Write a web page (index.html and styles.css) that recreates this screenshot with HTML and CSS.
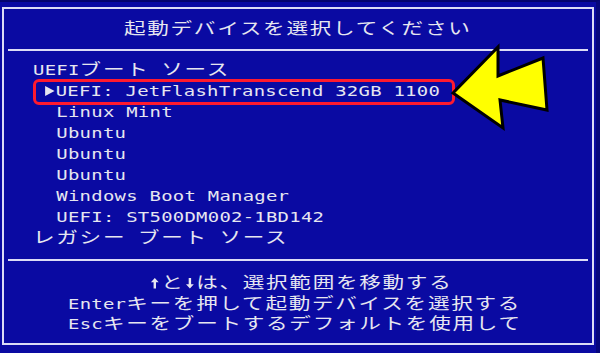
FILE: index.html
```html
<!DOCTYPE html>
<html lang="ja">
<head>
<meta charset="utf-8">
<title>起動デバイスを選択してください</title>
<link rel="stylesheet" href="styles.css">
</head>
<body>
<div class="screen">
  <div class="title">起動デバイスを選択してください</div>
  <div class="sep"></div>
  <div class="list">
    <div class="row">UEFI<span class="j">ブート</span> <span class="j">ソース</span></div>
    <div class="row"> <span class="tri"></span>UEFI: JetFlashTranscend 32GB 1100</div>
    <div class="row">  Linux Mint</div>
    <div class="row">  Ubuntu</div>
    <div class="row">  Ubuntu</div>
    <div class="row">  Ubuntu</div>
    <div class="row">  Windows Boot Manager</div>
    <div class="row">  UEFI: ST500DM002-1BD142</div>
    <div class="row"><span class="j">レガシー</span> <span class="j">ブート</span> <span class="j">ソース</span></div>
  </div>
  <div class="sep sep-bottom"></div>
  <div class="help">
    <div class="hrow">       <span class="ar" aria-label="↑"><svg viewBox="0 0 8.63 14" width="8.63" height="14"><path d="M4.3 2 L7.2 6.2 L5.2 6.2 L5.2 12.5 L3.4 12.5 L3.4 6.2 L1.4 6.2 Z" fill="#e6e6f0"/></svg></span><span class="j">と</span><span class="ar" aria-label="↓"><svg viewBox="0 0 8.63 14" width="8.63" height="14"><path d="M4.3 12.5 L7.2 8.3 L5.2 8.3 L5.2 2 L3.4 2 L3.4 8.3 L1.4 8.3 Z" fill="#e6e6f0"/></svg></span><span class="j">は、選択範囲を移動する</span></div>
    <div class="hrow">Enter<span class="j">キーを押して起動デバイスを選択する</span></div>
    <div class="hrow">Esc<span class="j">キーをブートするデフォルトを使用して</span></div>
  </div>
  <div class="highlight"></div>
  <svg class="arrow" viewBox="0 0 120 105" width="120" height="105">
    <polygon points="13,58 58,12 58,41 103,23 107,75 60,65 63,93" fill="#ffff00" stroke="#000000" stroke-width="3" stroke-linejoin="miter"/>
  </svg>
</div>
</body>
</html>
```
FILE: styles.css
```css
html, body {
  margin: 0;
  overflow: hidden;
}
html {
  background: #0a0aa0;
}
body {
  width: 600px;
  height: 353px;
  box-sizing: border-box;
  background: #0a0aa2;
  border-top: 2px solid #05056e;
  border-right: 4px solid #06067c;
  padding: 5px 0 0 2px;
}
.screen {
  position: relative;
  width: 592px;
  height: 338px;
  box-sizing: border-box;
  border: 2px solid #dcdcf6;
  color: #e6e6f0;
  font-family: "DejaVu Sans Mono", "Liberation Mono", monospace;
  font-size: 14px;
  letter-spacing: 0.2px;
}
.title {
  width: max-content;
  margin: 6px auto 0;
  height: 24px;
  line-height: 24px;
  font-family: "Noto Sans CJK JP", sans-serif;
  font-size: 16px;
  letter-spacing: 1.26px;
  transform: scaleX(1.35);
}
.sep {
  height: 2px;
  margin: 10px 4px 0;
  background: #dcdcf6;
}
.list {
  margin: 8.75px 0 0 29px;
  width: max-content;
  transform: scaleX(1.35);
  transform-origin: 0 0;
}
.row {
  height: 21px;
  line-height: 21px;
  white-space: pre;
}
.j {
  font-family: "Noto Sans CJK JP", sans-serif;
  font-size: 16px;
  line-height: 1;
  letter-spacing: 1.26px;
}
.tri {
  display: inline-block;
  width: 0;
  height: 0;
  border-left: 7.5px solid #e6e6f0;
  border-top: 5px solid transparent;
  border-bottom: 5px solid transparent;
  margin-right: 1.13px;
  vertical-align: 0;
}
.ar {
  display: inline-block;
  width: 8.63px;
  height: 14px;
  vertical-align: -2px;
}
.ar svg {
  display: block;
}
.sep-bottom {
  margin-top: 10.25px;
}
.help {
  margin: 12px 0 0 64px;
  width: max-content;
  transform: scaleX(1.35);
  transform-origin: 0 0;
}
.hrow {
  height: 20.5px;
  line-height: 20.5px;
  white-space: pre;
}
.highlight {
  position: absolute;
  left: 29px;
  top: 70px;
  width: 422px;
  height: 26px;
  box-sizing: border-box;
  border: 3px solid #ff1a2e;
  border-radius: 6px;
}
.arrow {
  position: absolute;
  left: 436px;
  top: 26px;
  overflow: visible;
}
```
